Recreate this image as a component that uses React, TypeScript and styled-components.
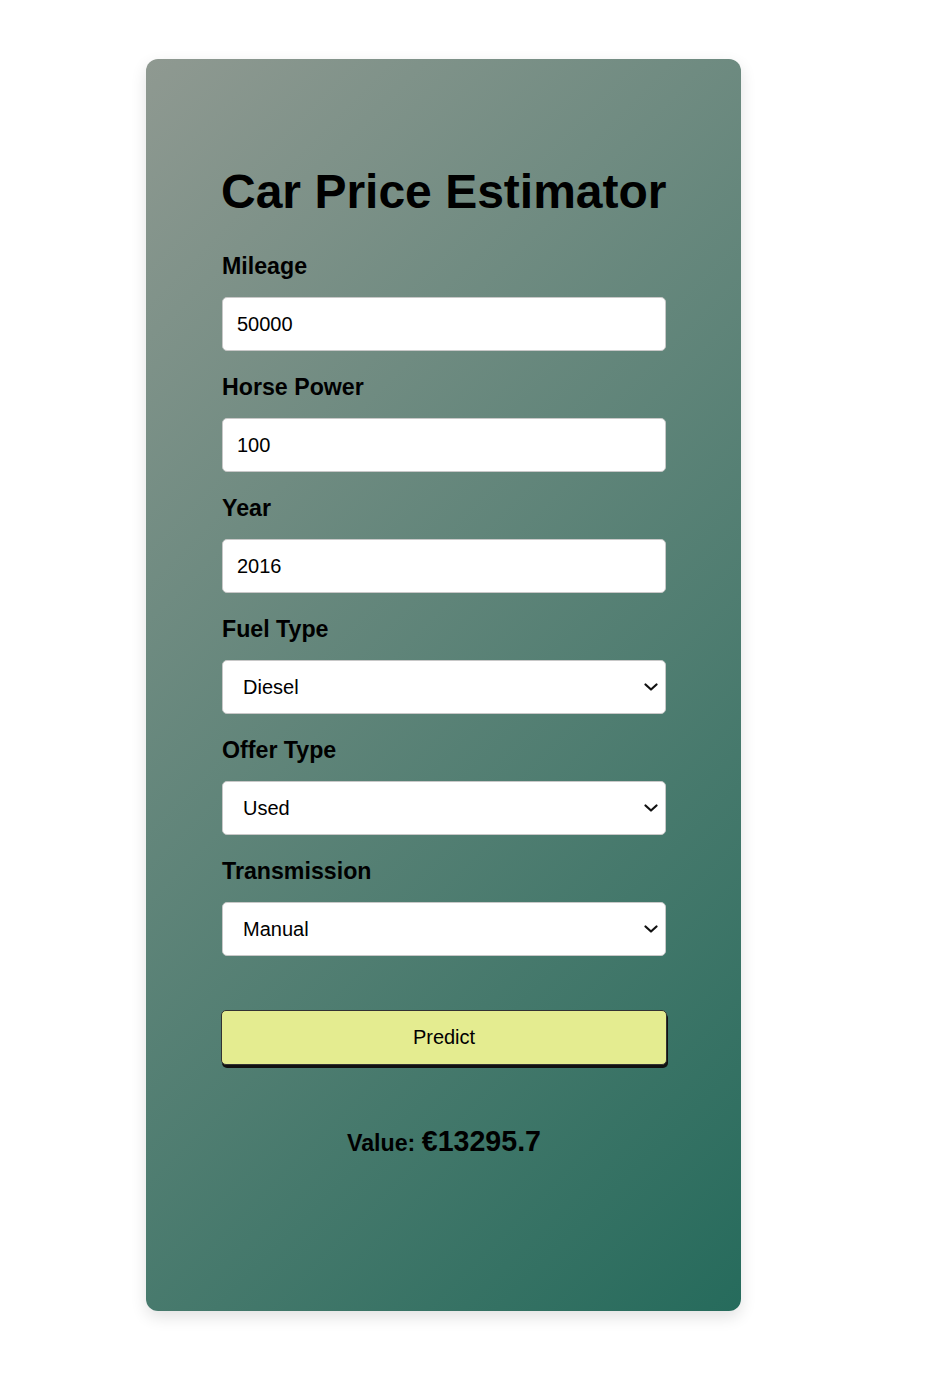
import React, { useState } from "react";
import styled, { createGlobalStyle } from "styled-components";

const Global = createGlobalStyle`
  html, body { margin: 0; padding: 0; background: #ffffff; }
  body { font-family: "Liberation Sans", Arial, sans-serif; color: #000; }
  * { box-sizing: border-box; }
`;

const Page = styled.div`
  padding: 59px 0 64px 146px;
`;

const Card = styled.div`
  width: 595px;
  min-height: 1252px;
  border-radius: 12px;
  background: linear-gradient(135deg, #8f9991 0%, #266b5c 100%);
  box-shadow: 0 6px 16px rgba(0, 0, 0, 0.12);
  padding: 105px 75px 60px 76px;
`;

const Title = styled.h1`
  margin: 0 0 34px -1px;
  font-size: 48px;
  font-weight: 700;
  line-height: 55px;
  white-space: nowrap;
`;

const Field = styled.div`
  display: flex;
  flex-direction: column;
  margin-bottom: 23px;
`;

const Label = styled.label`
  font-size: 23.2px;
  font-weight: 700;
  line-height: 27px;
  margin-bottom: 17px;
`;

const Input = styled.input`
  width: 444px;
  height: 54px;
  padding: 0 14px;
  font-family: "Liberation Sans", Arial, sans-serif;
  font-size: 20px;
  color: #000;
  background: #fff;
  border: 1px solid #c8c8c8;
  border-radius: 5px;
  outline: none;
`;

const chevron = encodeURIComponent(
  `<svg xmlns="http://www.w3.org/2000/svg" width="14" height="10" viewBox="0 0 14 10"><path d="M1.5 2.5 L7 7.5 L12.5 2.5" fill="none" stroke="#111" stroke-width="2.2" stroke-linecap="round" stroke-linejoin="round"/></svg>`
);

const Select = styled.select`
  appearance: none;
  -webkit-appearance: none;
  width: 444px;
  height: 54px;
  padding: 0 30px 0 20px;
  font-family: "Liberation Sans", Arial, sans-serif;
  font-size: 20px;
  color: #000;
  background: #fff url("data:image/svg+xml,${chevron}") no-repeat right 7px center;
  border: 1px solid #c8c8c8;
  border-radius: 5px;
  outline: none;
`;

const Button = styled.button`
  display: block;
  width: 446px;
  height: 55px;
  margin: 54px 0 0 -1px;
  background: #e4ec90;
  border: 1px solid #333;
  border-radius: 5px;
  box-shadow: 1px 3px 0 #111;
  font-family: "Liberation Sans", Arial, sans-serif;
  font-size: 20px;
  color: #000;
  cursor: pointer;
`;

const Result = styled.h2`
  margin: 60px 0 0;
  text-align: center;
  font-size: 23.2px;
  font-weight: 700;
`;

const Amount = styled.span`
  font-size: 28.6px;
`;

export default function App() {
  const [mileage, setMileage] = useState("50000");
  const [hp, setHp] = useState("100");
  const [year, setYear] = useState("2016");
  const [fuel, setFuel] = useState("Diesel");
  const [offer, setOffer] = useState("Used");
  const [trans, setTrans] = useState("Manual");

  return (
    <>
      <Global />
      <Page>
        <Card>
          <Title>Car Price Estimator</Title>
          <Field>
            <Label>Mileage</Label>
            <Input value={mileage} onChange={(e) => setMileage(e.target.value)} />
          </Field>
          <Field>
            <Label>Horse Power</Label>
            <Input value={hp} onChange={(e) => setHp(e.target.value)} />
          </Field>
          <Field>
            <Label>Year</Label>
            <Input value={year} onChange={(e) => setYear(e.target.value)} />
          </Field>
          <Field>
            <Label>Fuel Type</Label>
            <Select value={fuel} onChange={(e) => setFuel(e.target.value)}>
              <option>Diesel</option>
              <option>Gasoline</option>
              <option>Electric</option>
            </Select>
          </Field>
          <Field>
            <Label>Offer Type</Label>
            <Select value={offer} onChange={(e) => setOffer(e.target.value)}>
              <option>Used</option>
              <option>New</option>
            </Select>
          </Field>
          <Field>
            <Label>Transmission</Label>
            <Select value={trans} onChange={(e) => setTrans(e.target.value)}>
              <option>Manual</option>
              <option>Automatic</option>
            </Select>
          </Field>
          <Button>Predict</Button>
          <Result>
            Value: <Amount>€13295.7</Amount>
          </Result>
        </Card>
      </Page>
    </>
  );
}
